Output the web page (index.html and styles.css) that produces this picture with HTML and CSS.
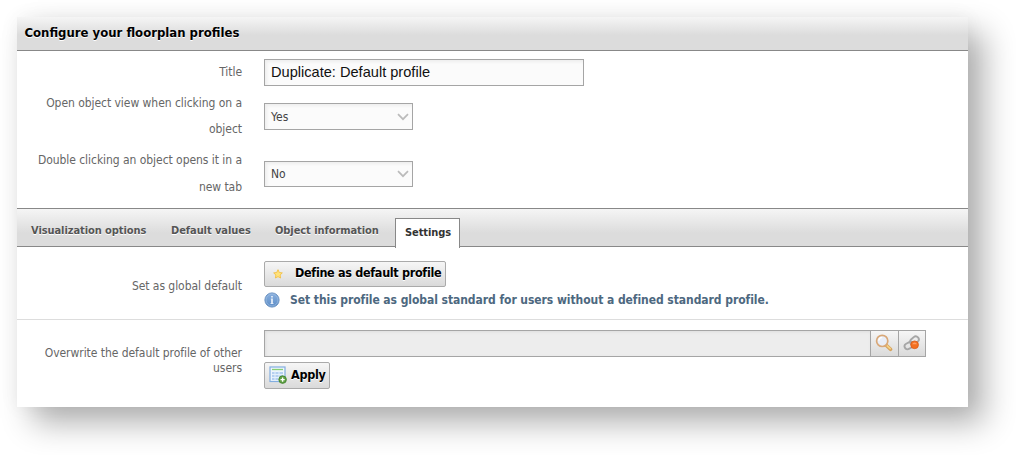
FILE: index.html
```html
<!DOCTYPE html>
<html lang="en">
<head>
<meta charset="utf-8">
<title>Configure your floorplan profiles</title>
<link rel="stylesheet" href="styles.css">
</head>
<body>
<main class="panel">
  <h1 class="panel-title"><span>Configure your floorplan profiles</span></h1>
  <section class="general">
    <div class="row row-title"><label class="label"><span>Title</span></label><div class="field field-title"><span>Duplicate: Default profile</span></div></div>
    <div class="row row-open"><label class="label"><span>Open object view when clicking on a</span><br><span>object</span></label>
      <div class="field select"><span>Yes</span><svg class="chevron" viewBox="0 0 12 8"><path d="M1 1.2 6 6.2l5-5"/></svg></div></div>
    <div class="row row-double"><label class="label"><span>Double clicking an object opens it in a</span><br><span>new tab</span></label>
      <div class="field select"><span>No</span><svg class="chevron" viewBox="0 0 12 8"><path d="M1 1.2 6 6.2l5-5"/></svg></div></div>
  </section>
  <nav class="tabs">
    <a class="tab tab-vis"><span>Visualization options</span></a>
    <a class="tab tab-def"><span>Default values</span></a>
    <a class="tab tab-obj"><span>Object information</span></a>
    <a class="tab active"><span>Settings</span></a>
  </nav>
  <section class="setting setting-global">
    <label class="label"><span>Set as global default</span></label>
    <div class="controls">
      <button class="button button-default">
        <svg class="icon-star" viewBox="0 0 10 10"><path d="m5 .7 1.3 2.8 3 .4-2.2 2.1.5 3L5 7.6 2.4 9l.5-3L.7 3.9l3-.4z" fill="#ffe27a" stroke="#f3bf45" stroke-width=".9"/></svg>
        <span>Define as default profile</span>
      </button>
      <p class="hint">
        <svg class="icon-info" viewBox="0 0 16 16"><defs><linearGradient id="info" x2="0" y2="1"><stop stop-color="#8bb1df"/><stop offset="1" stop-color="#5c8cc6"/></linearGradient></defs><circle cx="8" cy="8" r="7.1" fill="url(#info)" stroke="#6c93c2"/><circle cx="8" cy="8" r="5.9" fill="none" stroke="#a0bfe3" stroke-width=".6"/><path d="M7.1 4h1.8v1.5H7.1zM6.8 6.5h2.1v4.6h.5v.9H6.6v-.9h.5V7.4h-.3z" fill="#e4edf8"/></svg>
        <span>Set this profile as global standard for users without a defined standard profile.</span>
      </p>
    </div>
  </section>
  <section class="setting setting-users">
    <label class="label"><span>Overwrite the default profile of other</span><br><span>users</span></label>
    <div class="controls">
      <div class="picker">
        <div class="picker-field"></div>
        <span class="picker-button"><svg class="icon" viewBox="0 0 18 18"><path d="m11.5 11.5 4 3.8" stroke="#d6a25c" stroke-width="3.6" stroke-linecap="round"/><path d="m12.2 11.8 3 2.8" stroke="#f5d084" stroke-width="1.8" stroke-linecap="round"/><circle cx="7.2" cy="6.9" r="5.6" fill="#e9eef8" stroke="#d9a878" stroke-width="1.7"/><path d="M3.8 6.7A3.6 3.6 0 0 1 7.2 3.4" fill="none" stroke="#fff" stroke-width="1.3"/></svg></span>
        <span class="picker-button last"><svg class="icon" viewBox="0 0 18 18"><g fill="none" stroke="#a6a6a6" stroke-width="1.9"><rect x="6.6" y="3.6" width="9.6" height="6" rx="3" transform="rotate(-42 11.4 6.6)"/><rect x="1.4" y="8.6" width="9.4" height="5.8" rx="2.9" transform="rotate(-28 6.1 11.5)"/></g><circle cx="11.6" cy="10.8" r="3.9" fill="#f37021" stroke="#d95712" stroke-width=".7"/><path d="M9.2 10.2a2.5 2.3 0 0 1 4.8 0z" fill="#ff9d62"/></svg></span>
      </div>
      <button class="button button-apply">
        <svg class="icon-table" viewBox="0 0 18 18"><rect x="1" y="1" width="15" height="14.5" fill="#eef5fd" stroke="#83aee0" stroke-width="1.2"/><path d="M3 3.5h11" stroke="#87cf75" stroke-width="1.3"/><path d="M3 6h11v8H3z" fill="#b5d0f1"/><path d="M6 5v9M10 5v9M3 8.5h11M3 11.5h11" stroke="#e3effc"/><circle cx="13.6" cy="13.6" r="3.8" fill="#60a044" stroke="#3f812c" stroke-width=".8"/><path d="M13.6 11.5v4.2M11.5 13.6h4.2" stroke="#fff" stroke-width="1.4"/></svg>
        <span>Apply</span>
      </button>
    </div>
  </section>
</main>
</body>
</html>
```
FILE: styles.css
```css
* { box-sizing: border-box; }
body { margin: 0; padding: 17px; height: 455px; overflow: hidden; background: #fff; font: 12px "DejaVu Sans Condensed", "DejaVu Sans", sans-serif; font-stretch: condensed; color: #666; }
span { white-space: nowrap; }
.panel { width: 951px; height: 390px; background: #fff; box-shadow: 16px 16px 30px rgba(0,0,0,.31), 0 0 20px rgba(0,0,0,.05); }
.panel-title { margin: 0; height: 34px; padding-left: 7.5px; border-bottom: 1px solid #888; background: linear-gradient(#f5f5f5, #dcdcdc 55%); font-size: 13px; line-height: 31px; color: #000; text-shadow: 0 1px 0 #fff; }
.general { height: 157px; padding-top: 8px; }
.row { display: flex; gap: 22px; }
.label { width: 225px; flex: none; text-align: right; letter-spacing: -.05px; }
.row-title { height: 31px; line-height: 26px; }
.row-open { height: 57px; line-height: 26px; }
.row-double { line-height: 27px; }
.row-open .select { margin-top: 13px; }
.row-double .select { margin-top: 14px; height: 26px; line-height: 24px; }
.field { height: 27px; border: 1px solid #a5a5a5; background: #fbfbfb; box-shadow: inset 2px 2px 3px #eee; padding-left: 6px; color: #444; }
.field-title { width: 320px; font: 14.6px/25px "Liberation Sans", Arial, sans-serif; color: #111; }
.select { width: 149px; display: flex; align-items: center; justify-content: space-between; padding-right: 3px; }
.chevron { width: 12px; height: 8px; fill: none; stroke: #bbb; stroke-width: 1.7; }
.tabs { height: 39px; display: flex; align-items: flex-start; border: solid #888; border-width: 1px 0; background: linear-gradient(#f5f5f5, #dcdcdc 65%); font-size: 11px; font-weight: bold; line-height: 43px; letter-spacing: -.07px; text-shadow: 0 1px 0 #fff; color: #555; padding-left: 14px; }
.tab-vis { width: 140px; }
.tab-def { width: 104px; }
.tab-obj { width: 120px; }
.active { width: 65px; height: 30px; margin-top: 9px; background: #fff; border: solid #888; border-width: 1px 1px 0; padding-left: 9px; line-height: 27px; color: #333; }
.setting { display: flex; gap: 22px; }
.setting-global { height: 73px; padding-top: 14px; border-bottom: 1px solid #ddd; }
.setting-global .label { line-height: 50px; }
.setting-users { padding-top: 10px; }
.setting-users .label { padding-top: 16px; line-height: 15px; }
.button { display: flex; align-items: center; padding: 0; height: 27px; border: 1px solid #aaa; border-radius: 2px; background: linear-gradient(#f6f6f6, #dadada); color: #000; font: bold 12.5px "DejaVu Sans Condensed", "DejaVu Sans", sans-serif; font-stretch: condensed; text-shadow: 0 1px 0 #fff; }
.button-default { width: 182px; height: 26px; padding: 0 0 3px 8px; letter-spacing: -.32px; }
.icon-star { flex: none; width: 10px; height: 10px; margin: 2px 12px 0 0; }
.hint { display: flex; align-items: center; gap: 10px; height: 16px; margin: 5px 0 0; color: #4d6880; font-weight: bold; letter-spacing: -.06px; }
.icon-info { width: 16px; height: 16px; }
.picker { display: flex; width: 662px; height: 27px; border: 1px solid #a5a5a5; }
.picker-field { flex: 1; background: #ededed; box-shadow: inset 1px 1px 3px #ddd; }
.picker-button { width: 28px; border-left: 1px solid #a5a5a5; background: linear-gradient(#f6f6f6, #dadada); padding: 3px 4px; }
.picker-button.last { width: 27px; }
.icon, .icon-table { display: block; width: 18px; height: 18px; }
.button-apply { width: 66px; margin-top: 5px; padding: 0 0 2px 4px; gap: 4px; letter-spacing: -.3px; }
.icon-table { flex: none; }
```
